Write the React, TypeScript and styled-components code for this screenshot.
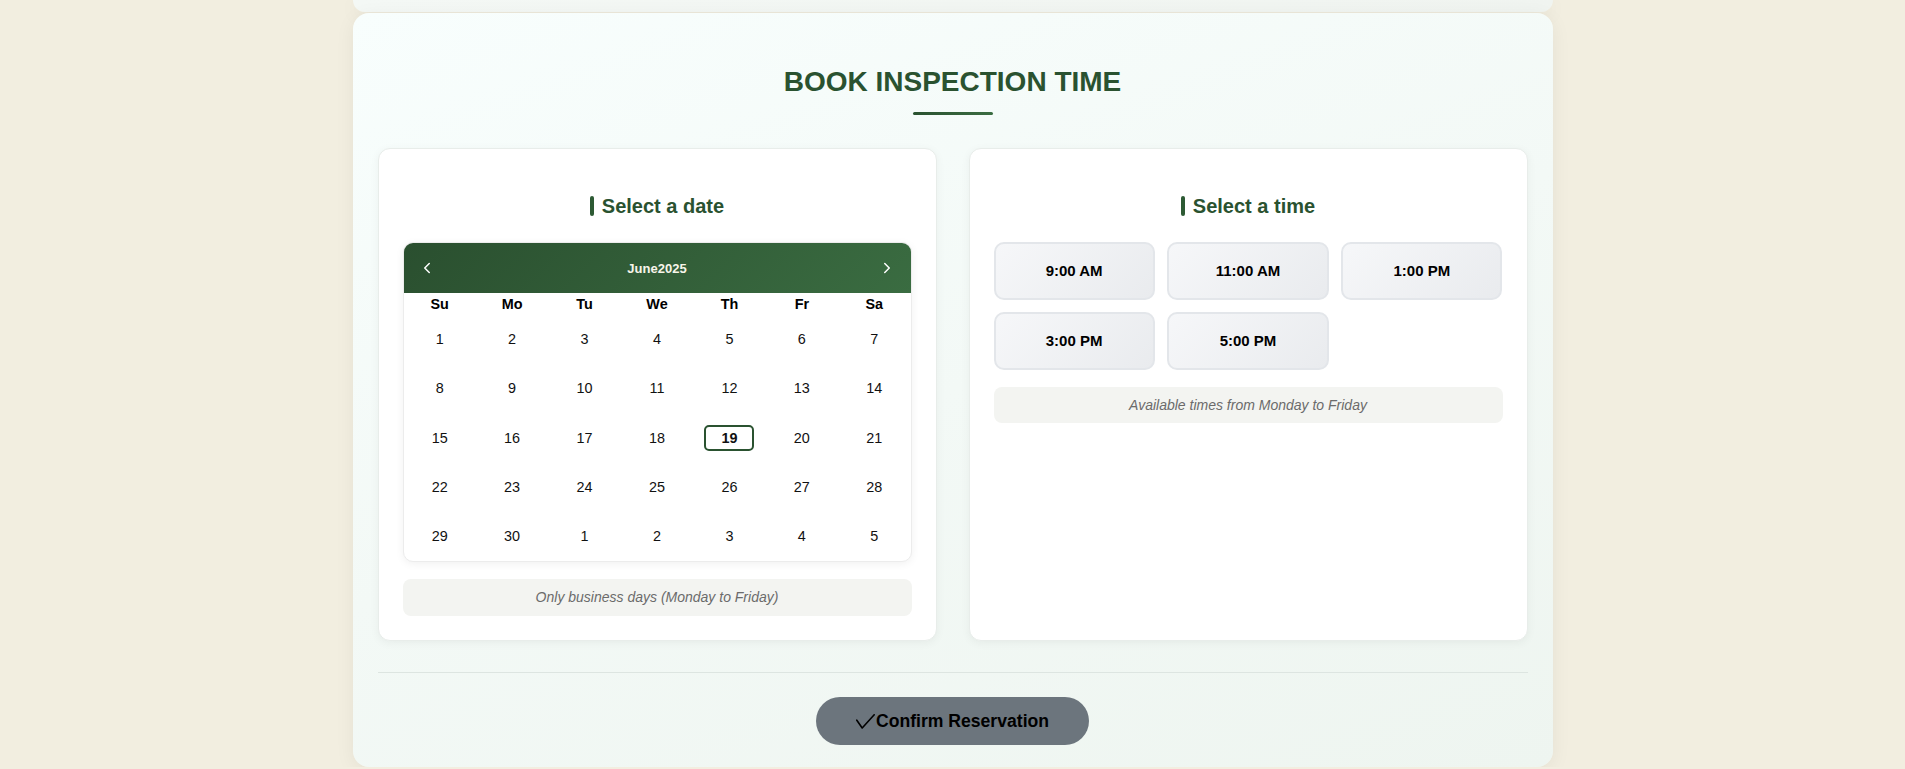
import React from "react";
import styled, { createGlobalStyle } from "styled-components";
import { ChevronLeft, ChevronRight } from "lucide-react";

const GlobalStyle = createGlobalStyle`
  html, body {
    margin: 0;
    padding: 0;
    background: #f2eee0;
    font-family: "Liberation Sans", Arial, sans-serif;
  }
  * { box-sizing: border-box; }
`;

const Page = styled.div`
  display: flex;
  flex-direction: column;
  align-items: center;
  gap: 1px;
`;

const PrevSection = styled.div`
  width: 1200px;
  height: 12px;
  background: linear-gradient(135deg, #f4f8f5 0%, #f0f4f0 100%);
  border-radius: 0 0 16px 16px;
  box-shadow: 0 4px 20px rgba(0, 0, 0, 0.06);
`;

const Section = styled.section`
  width: 1200px;
  padding: 52px 25px 22px;
  background: linear-gradient(160deg, #f8fefd 0%, #f3f9f6 50%, #eef5f0 100%);
  border-radius: 16px;
  box-shadow: 0 4px 20px rgba(0, 0, 0, 0.06);
`;

const Title = styled.h2`
  margin: 0;
  text-align: center;
  font-size: 28px;
  line-height: 1.2;
  font-weight: 700;
  color: #2a5230;
`;

const TitleRule = styled.div`
  width: 80px;
  height: 3px;
  margin: 13.5px auto 33px;
  border-radius: 2px;
  background: linear-gradient(90deg, #2a5230, #3b6d42);
`;

const Columns = styled.div`
  display: grid;
  grid-template-columns: 1fr 1fr;
  gap: 32px;
`;

const Panel = styled.div`
  background: #ffffff;
  border: 1px solid #e8edea;
  border-radius: 12px;
  padding: 45px 24px 24px;
  box-shadow: 0 2px 10px rgba(0, 0, 0, 0.05);
`;

const PanelHeading = styled.h3`
  margin: 0 0 24px;
  display: flex;
  align-items: center;
  justify-content: center;
  gap: 8px;
  font-size: 20px;
  line-height: 24px;
  font-weight: 700;
  color: #2a5230;

  &::before {
    content: "";
    width: 4px;
    height: 20px;
    border-radius: 2px;
    background: #2d5a34;
  }
`;

const Calendar = styled.div`
  background: #ffffff;
  border: 1px solid #ececec;
  border-radius: 10px;
  overflow: hidden;
  box-shadow: 0 2px 8px rgba(0, 0, 0, 0.06);
`;

const CalHeader = styled.div`
  height: 50px;
  display: flex;
  align-items: center;
  justify-content: space-between;
  padding: 0 13px;
  background: linear-gradient(135deg, #2a4f2f 0%, #3a6c41 100%);
  color: #f8f5ea;
`;

const NavButton = styled.button`
  width: 20px;
  height: 20px;
  padding: 0;
  border: none;
  background: none;
  color: #ffffff;
  display: flex;
  align-items: center;
  justify-content: center;
  cursor: pointer;
`;

const MonthLabel = styled.span`
  font-size: 13px;
  font-weight: 700;
`;

const WeekRow = styled.div`
  display: grid;
  grid-template-columns: repeat(7, 1fr);
  height: 21px;
  align-items: center;
`;

const WeekDay = styled.span`
  text-align: center;
  font-size: 14.4px;
  font-weight: 700;
  color: #000;
`;

const DayGrid = styled.div`
  display: grid;
  grid-template-columns: repeat(7, 1fr);
  grid-auto-rows: 49.4px;
`;

const DayCell = styled.div`
  display: flex;
  align-items: center;
  justify-content: center;
`;

const DayTile = styled.button<{ $selected?: boolean }>`
  width: 50px;
  height: 26px;
  padding: 0;
  display: flex;
  align-items: center;
  justify-content: center;
  border: 2px solid ${(p) => (p.$selected ? "#2a5230" : "transparent")};
  border-radius: 5px;
  background: transparent;
  font-family: "Liberation Sans", Arial, sans-serif;
  font-size: 14.4px;
  font-weight: ${(p) => (p.$selected ? 700 : 400)};
  color: #111;
  cursor: pointer;
`;

const Note = styled.p`
  margin: 17px 0 0;
  padding: 10px;
  background: #f3f4f1;
  border-radius: 8px;
  font-size: 14px;
  line-height: 16.7px;
  font-style: italic;
  color: #6b6b6b;
  text-align: center;
`;

const TimeGrid = styled.div`
  display: grid;
  grid-template-columns: repeat(3, 1fr);
  gap: 12.6px;
`;

const TimeButton = styled.button`
  height: 57.5px;
  border: 2px solid #e3e6ea;
  border-radius: 10px;
  background: linear-gradient(135deg, #f6f7f9 0%, #e9ebee 100%);
  font-family: "Liberation Sans", Arial, sans-serif;
  font-size: 15px;
  font-weight: 700;
  color: #000;
  cursor: pointer;
`;

const Footer = styled.div`
  margin-top: 31px;
  border-top: 1px solid #dde5e1;
  padding-top: 24px;
  display: flex;
  justify-content: center;
`;

const ConfirmButton = styled.button`
  height: 48.5px;
  padding: 0 40px;
  display: inline-flex;
  align-items: center;
  gap: 1px;
  border: none;
  border-radius: 999px;
  background: #6c757d;
  color: #000;
  font-family: "Liberation Sans", Arial, sans-serif;
  font-size: 17.6px;
  font-weight: 700;
  cursor: pointer;

  svg {
    margin-top: 1px;
  }
`;

const weekDays = ["Su", "Mo", "Tu", "We", "Th", "Fr", "Sa"];
const days: number[] = [
  ...Array.from({ length: 30 }, (_, i) => i + 1),
  1, 2, 3, 4, 5,
];
const times = ["9:00 AM", "11:00 AM", "1:00 PM", "3:00 PM", "5:00 PM"];

export default function App() {
  return (
    <>
      <GlobalStyle />
      <Page>
        <PrevSection />
        <Section>
          <Title>BOOK INSPECTION TIME</Title>
          <TitleRule />
          <Columns>
            <Panel>
              <PanelHeading>Select a date</PanelHeading>
              <Calendar>
                <CalHeader>
                  <NavButton aria-label="Previous month">
                    <ChevronLeft size={18} strokeWidth={2} />
                  </NavButton>
                  <MonthLabel>June2025</MonthLabel>
                  <NavButton aria-label="Next month">
                    <ChevronRight size={18} strokeWidth={2} />
                  </NavButton>
                </CalHeader>
                <WeekRow>
                  {weekDays.map((d) => (
                    <WeekDay key={d}>{d}</WeekDay>
                  ))}
                </WeekRow>
                <DayGrid>
                  {days.map((d, i) => (
                    <DayCell key={i}>
                      <DayTile $selected={i === 18}>{d}</DayTile>
                    </DayCell>
                  ))}
                </DayGrid>
              </Calendar>
              <Note>Only business days (Monday to Friday)</Note>
            </Panel>
            <Panel>
              <PanelHeading>Select a time</PanelHeading>
              <TimeGrid>
                {times.map((t) => (
                  <TimeButton key={t}>{t}</TimeButton>
                ))}
              </TimeGrid>
              <Note>Available times from Monday to Friday</Note>
            </Panel>
          </Columns>
          <Footer>
            <ConfirmButton>
              <svg width="19" height="15" viewBox="0 0 19 15" fill="none">
                <polyline
                  points="0.8,6.2 6.2,14 18.2,0.8"
                  stroke="currentColor"
                  strokeWidth="1.6"
                  strokeLinecap="round"
                  strokeLinejoin="round"
                />
              </svg>
              Confirm Reservation
            </ConfirmButton>
          </Footer>
        </Section>
      </Page>
    </>
  );
}
